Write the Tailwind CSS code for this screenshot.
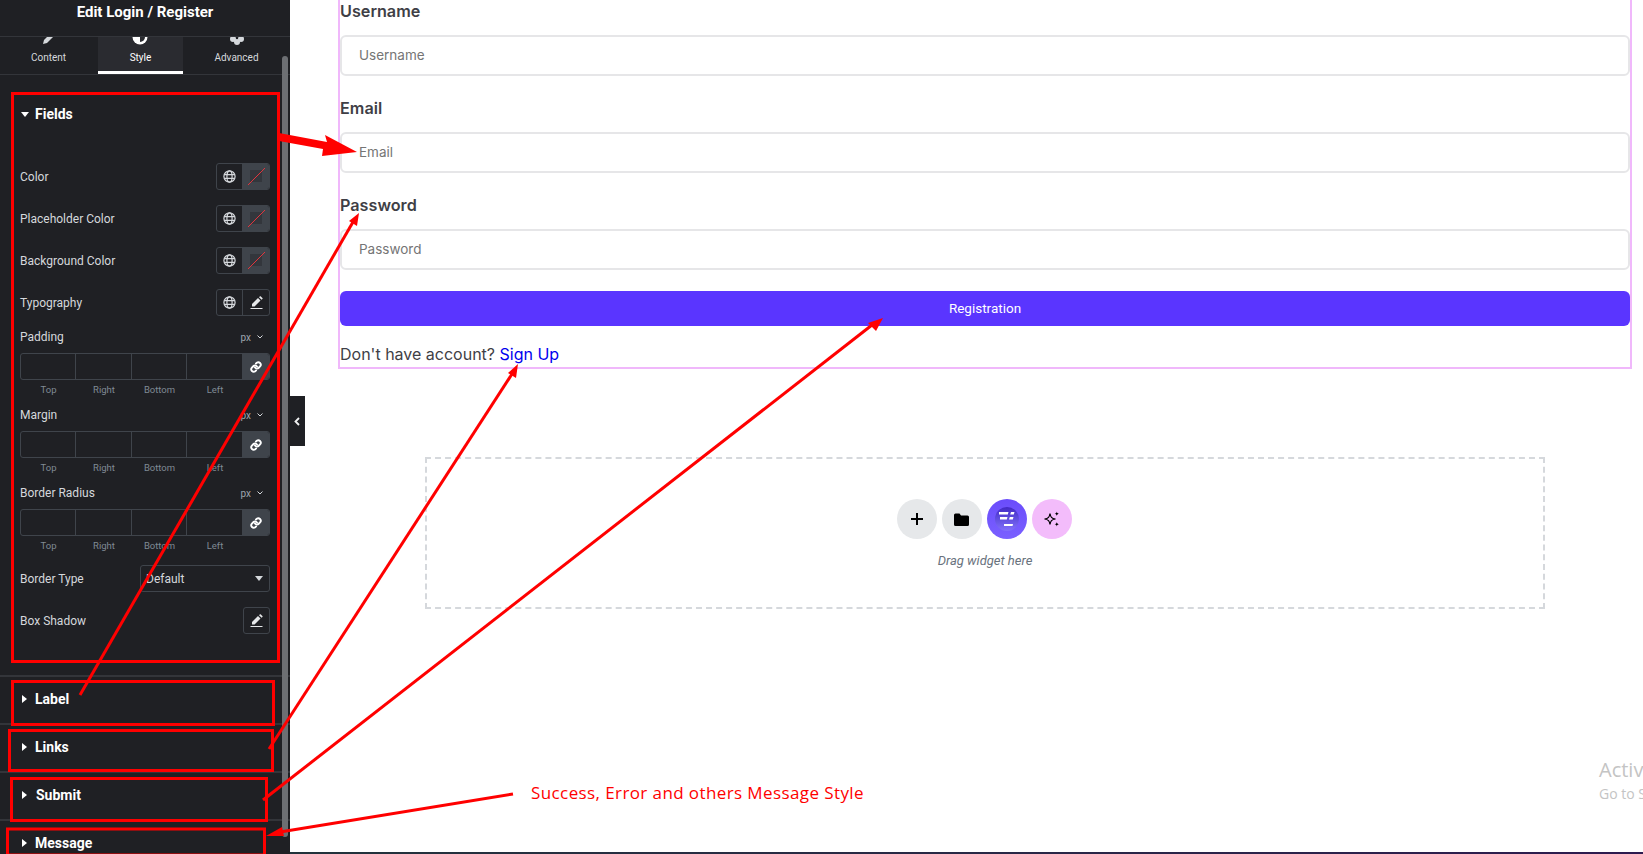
<!DOCTYPE html>
<html lang="en">
<head>
    <meta charset="UTF-8">
    <title>Edit Login / Register</title>
    <script src="https://cdn.jsdelivr.net/npm/@tailwindcss/browser@4"></script>
</head>
<body class="bg-white overflow-hidden">
<div class="relative w-[1643px] h-[854px] overflow-hidden flex font-['Roboto',sans-serif]">

    <!-- Editor panel -->
    <aside class="w-[290px] h-[854px] shrink-0 bg-[#1f2024] text-[#d5d8dc] text-[12px] flex flex-col overflow-hidden">
        <div class="h-[37px] shrink-0 border-b border-[#33353a] text-center text-white font-bold text-[15px] leading-[24px]">Edit Login / Register</div>

        <!-- Tabs -->
        <div class="h-[38px] shrink-0 border-b border-[#33353a] grid grid-cols-[98px_85px_1fr] text-[10px] text-center">
            <div class="relative h-[37px] overflow-hidden text-[#d5d8dc]">
                <svg class="absolute left-[42px] -top-[6px] w-[14px] h-[14px]" viewBox="0 0 14 14" fill="#d5d8dc"><path d="M1 13l1-4 7-7 3 3-7 7z"/></svg>
                <span class="absolute left-[-1px] right-0 top-[14px] leading-[14px]">Content</span>
            </div>
            <div class="relative h-[37px] overflow-hidden bg-[#2a2b30] border-b-[3px] border-white text-white">
                <svg class="absolute left-[34px] -top-[8px] w-[16px] h-[16px]" viewBox="0 0 16 16"><circle cx="8" cy="8" r="7.500" fill="#fff"/><path d="M8 3a5 5 0 0 1 0 10z" fill="#2a2b30"/></svg>
                <span class="absolute inset-x-0 top-[14px] leading-[14px]">Style</span>
            </div>
            <div class="relative h-[37px] overflow-hidden text-[#d5d8dc]">
                <svg class="absolute left-[47px] -top-[5px] w-[14px] h-[14px]" viewBox="0 0 14 14" fill="#d5d8dc"><circle cx="3" cy="7" r="3"/><circle cx="11" cy="7" r="3"/><circle cx="7" cy="10" r="3"/></svg>
                <span class="absolute inset-x-0 top-[14px] leading-[14px]">Advanced</span>
            </div>
        </div>

        <!-- Fields section -->
        <div class="h-[80px] shrink-0 flex items-center pl-[21px] pb-[2px] gap-[6px] text-white font-bold text-[14px]">
            <svg class="w-[8px] h-[5px]" viewBox="0 0 8 5" fill="#fff"><path d="M0 0h8L4 5z"/></svg>
            <span>Fields</span>
        </div>
        <div class="px-[20px] shrink-0">
            <div class="h-[42px] flex items-center justify-between">
                <span class="pt-[2px]">Color</span>
                <div class="w-[54px] h-[27px] flex border border-[#3f444b] rounded-[3px] overflow-hidden">
                    <div class="w-[26px] flex items-center justify-center border-r border-[#3f444b]">
                        <svg class="w-[13px] h-[13px]" viewBox="0 0 13 13" fill="none" stroke="#d5d8dc" stroke-width="1.200"><circle cx="6.500" cy="6.500" r="5.600"/><ellipse cx="6.500" cy="6.500" rx="2.600" ry="5.600"/><path d="M1.200 4.600h10.600M1.200 8.400h10.600"/></svg>
                    </div>
                    <div class="flex-1 bg-[#3f444b] flex items-center justify-center">
                        <svg class="w-[19px] h-[19px]" viewBox="0 0 19 19"><rect x="3" y="3" width="12" height="12" fill="#33363c"/><path d="M1 18L18 1" stroke="#e2343c"/></svg>
                    </div>
                </div>
            </div>
            <div class="h-[42px] flex items-center justify-between">
                <span class="pt-[2px]">Placeholder Color</span>
                <div class="w-[54px] h-[27px] flex border border-[#3f444b] rounded-[3px] overflow-hidden">
                    <div class="w-[26px] flex items-center justify-center border-r border-[#3f444b]">
                        <svg class="w-[13px] h-[13px]" viewBox="0 0 13 13" fill="none" stroke="#d5d8dc" stroke-width="1.200"><circle cx="6.500" cy="6.500" r="5.600"/><ellipse cx="6.500" cy="6.500" rx="2.600" ry="5.600"/><path d="M1.200 4.600h10.600M1.200 8.400h10.600"/></svg>
                    </div>
                    <div class="flex-1 bg-[#3f444b] flex items-center justify-center">
                        <svg class="w-[19px] h-[19px]" viewBox="0 0 19 19"><rect x="3" y="3" width="12" height="12" fill="#33363c"/><path d="M1 18L18 1" stroke="#e2343c"/></svg>
                    </div>
                </div>
            </div>
            <div class="h-[42px] flex items-center justify-between">
                <span class="pt-[2px]">Background Color</span>
                <div class="w-[54px] h-[27px] flex border border-[#3f444b] rounded-[3px] overflow-hidden">
                    <div class="w-[26px] flex items-center justify-center border-r border-[#3f444b]">
                        <svg class="w-[13px] h-[13px]" viewBox="0 0 13 13" fill="none" stroke="#d5d8dc" stroke-width="1.200"><circle cx="6.500" cy="6.500" r="5.600"/><ellipse cx="6.500" cy="6.500" rx="2.600" ry="5.600"/><path d="M1.200 4.600h10.600M1.200 8.400h10.600"/></svg>
                    </div>
                    <div class="flex-1 bg-[#3f444b] flex items-center justify-center">
                        <svg class="w-[19px] h-[19px]" viewBox="0 0 19 19"><rect x="3" y="3" width="12" height="12" fill="#33363c"/><path d="M1 18L18 1" stroke="#e2343c"/></svg>
                    </div>
                </div>
            </div>
            <div class="h-[42px] flex items-center justify-between">
                <span class="pt-[2px]">Typography</span>
                <div class="w-[54px] h-[27px] flex border border-[#3f444b] rounded-[3px] overflow-hidden">
                    <div class="w-[26px] flex items-center justify-center border-r border-[#3f444b]">
                        <svg class="w-[13px] h-[13px]" viewBox="0 0 13 13" fill="none" stroke="#d5d8dc" stroke-width="1.200"><circle cx="6.500" cy="6.500" r="5.600"/><ellipse cx="6.500" cy="6.500" rx="2.600" ry="5.600"/><path d="M1.200 4.600h10.600M1.200 8.400h10.600"/></svg>
                    </div>
                    <div class="flex-1 flex items-center justify-center">
                        <svg class="w-[13px] h-[13px]" viewBox="0 0 13 13" fill="#e6e8ea"><path d="M2 8L8 2l2.500 2.500-6 6H2zM9 1.200l1-1h.6l2 2v.6l-1 1z"/><rect x="0.500" y="12" width="12" height="1"/></svg>
                    </div>
                </div>
            </div>

            <!-- Padding -->
            <div class="mb-px">
                <div class="h-[28px] flex items-center justify-between">
                    <span>Padding</span>
                    <span class="flex items-center gap-[6px] mr-[7px] text-[10px] text-[#9da5ae]">px<svg class="w-[6px] h-[4px]" viewBox="0 0 6 4" fill="none" stroke="#d5d8dc"><path d="M.5.500L3 3l2.500-2.500"/></svg></span>
                </div>
                <div class="mt-[2px] h-[27px] grid grid-cols-[55px_56px_55px_55px_27px] border border-[#3f444b] rounded-[3px] overflow-hidden">
                    <div class="border-r border-[#3f444b]"></div>
                    <div class="border-r border-[#3f444b]"></div>
                    <div class="border-r border-[#3f444b]"></div>
                    <div></div>
                    <div class="bg-[#3f444b] flex items-center justify-center">
                        <svg class="w-[12px] h-[12px]" viewBox="0 0 24 24" fill="none" stroke="#fff" stroke-width="3.800" stroke-linecap="round"><path d="M10 13a5 5 0 0 0 7.500.500l3-3a5 5 0 0 0-7-7l-1.700 1.700"/><path d="M14 11a5 5 0 0 0-7.500-.500l-3 3a5 5 0 0 0 7 7l1.700-1.700"/></svg>
                    </div>
                </div>
                <div class="h-[20px] pl-px grid grid-cols-[55px_56px_55px_56px_27px] text-center text-[9.500px] leading-[20px] text-[#7f8a94]"><span>Top</span><span>Right</span><span>Bottom</span><span>Left</span></div>
            </div>
            <!-- Margin -->
            <div class="mb-px">
                <div class="h-[28px] flex items-center justify-between">
                    <span>Margin</span>
                    <span class="flex items-center gap-[6px] mr-[7px] text-[10px] text-[#9da5ae]">px<svg class="w-[6px] h-[4px]" viewBox="0 0 6 4" fill="none" stroke="#d5d8dc"><path d="M.5.500L3 3l2.500-2.500"/></svg></span>
                </div>
                <div class="mt-[2px] h-[27px] grid grid-cols-[55px_56px_55px_55px_27px] border border-[#3f444b] rounded-[3px] overflow-hidden">
                    <div class="border-r border-[#3f444b]"></div>
                    <div class="border-r border-[#3f444b]"></div>
                    <div class="border-r border-[#3f444b]"></div>
                    <div></div>
                    <div class="bg-[#3f444b] flex items-center justify-center">
                        <svg class="w-[12px] h-[12px]" viewBox="0 0 24 24" fill="none" stroke="#fff" stroke-width="3.800" stroke-linecap="round"><path d="M10 13a5 5 0 0 0 7.500.500l3-3a5 5 0 0 0-7-7l-1.700 1.700"/><path d="M14 11a5 5 0 0 0-7.500-.500l-3 3a5 5 0 0 0 7 7l1.700-1.700"/></svg>
                    </div>
                </div>
                <div class="h-[20px] pl-px grid grid-cols-[55px_56px_55px_56px_27px] text-center text-[9.500px] leading-[20px] text-[#7f8a94]"><span>Top</span><span>Right</span><span>Bottom</span><span>Left</span></div>
            </div>
            <!-- Border radius -->
            <div class="mb-px">
                <div class="h-[28px] flex items-center justify-between">
                    <span>Border Radius</span>
                    <span class="flex items-center gap-[6px] mr-[7px] text-[10px] text-[#9da5ae]">px<svg class="w-[6px] h-[4px]" viewBox="0 0 6 4" fill="none" stroke="#d5d8dc"><path d="M.5.500L3 3l2.500-2.500"/></svg></span>
                </div>
                <div class="mt-[2px] h-[27px] grid grid-cols-[55px_56px_55px_55px_27px] border border-[#3f444b] rounded-[3px] overflow-hidden">
                    <div class="border-r border-[#3f444b]"></div>
                    <div class="border-r border-[#3f444b]"></div>
                    <div class="border-r border-[#3f444b]"></div>
                    <div></div>
                    <div class="bg-[#3f444b] flex items-center justify-center">
                        <svg class="w-[12px] h-[12px]" viewBox="0 0 24 24" fill="none" stroke="#fff" stroke-width="3.800" stroke-linecap="round"><path d="M10 13a5 5 0 0 0 7.500.500l3-3a5 5 0 0 0-7-7l-1.700 1.700"/><path d="M14 11a5 5 0 0 0-7.500-.500l-3 3a5 5 0 0 0 7 7l1.700-1.700"/></svg>
                    </div>
                </div>
                <div class="h-[20px] pl-px grid grid-cols-[55px_56px_55px_56px_27px] text-center text-[9.500px] leading-[20px] text-[#7f8a94]"><span>Top</span><span>Right</span><span>Bottom</span><span>Left</span></div>
            </div>

            <div class="h-[42px] flex items-center justify-between">
                <span class="pt-[2px]">Border Type</span>
                <div class="w-[130px] h-[27px] border border-[#3f444b] rounded-[3px] flex items-center justify-between pl-[5px] pr-[6px]">
                    <span class="pt-[2px]">Default</span>
                    <svg class="w-[8px] h-[5px]" viewBox="0 0 8 5" fill="#d5d8dc"><path d="M0 0h8L4 5z"/></svg>
                </div>
            </div>
            <div class="h-[42px] flex items-center justify-between">
                <span class="pt-[2px]">Box Shadow</span>
                <div class="w-[27px] h-[27px] border border-[#3f444b] rounded-[3px] flex items-center justify-center">
                    <svg class="w-[13px] h-[13px]" viewBox="0 0 13 13" fill="#e6e8ea"><path d="M2 8L8 2l2.500 2.500-6 6H2zM9 1.200l1-1h.6l2 2v.6l-1 1z"/><rect x="0.500" y="12" width="12" height="1"/></svg>
                </div>
            </div>
        </div>

        <!-- Collapsed sections -->
        <div class="mt-[34px] border-t-2 border-[#33353a] shrink-0">
            <div class="h-[48px] pb-[2px] border-b-2 border-[#33353a] flex items-center pl-[22px] gap-[8px] text-white font-bold text-[14px]">
                <svg class="w-[5px] h-[8px]" viewBox="0 0 5 8" fill="#fff"><path d="M0 0l5 4-5 4z"/></svg><span>Label</span>
            </div>
            <div class="h-[48px] pb-[2px] border-b-2 border-[#33353a] flex items-center pl-[22px] gap-[8px] text-white font-bold text-[14px]">
                <svg class="w-[5px] h-[8px]" viewBox="0 0 5 8" fill="#fff"><path d="M0 0l5 4-5 4z"/></svg><span>Links</span>
            </div>
            <div class="h-[48px] pb-[2px] border-b-2 border-[#33353a] flex items-center pl-[22px] gap-[8px] text-white font-bold text-[14px]">
                <svg class="w-[5px] h-[8px]" viewBox="0 0 5 8" fill="#fff"><path d="M0 0l5 4-5 4z"/></svg><span class="ml-px">Submit</span>
            </div>
            <div class="h-[48px] pb-[4px] flex items-center pl-[22px] gap-[8px] text-white font-bold text-[14px]">
                <svg class="w-[5px] h-[8px]" viewBox="0 0 5 8" fill="#fff"><path d="M0 0l5 4-5 4z"/></svg><span>Message</span>
            </div>
        </div>
    </aside>

    <!-- Panel scrollbar and collapse handle -->
    <div class="absolute left-[282px] top-[56px] w-[6px] h-[781px] rounded-[3px] bg-[#6d6f73]"></div>
    <div class="absolute left-[290px] top-[396px] w-[15px] h-[50px] pr-[1px] bg-[#1f2024] flex items-center justify-center">
        <svg class="w-[6px] h-[9px]" viewBox="0 0 6 9" fill="none" stroke="#f1f2f3" stroke-width="1.800"><path d="M5 1L1.500 4.500 5 8"/></svg>
    </div>

    <!-- Canvas -->
    <main class="flex-1 pl-[48px] pr-[11px] -mt-[1px] font-['Inter',sans-serif]">
        <div class="border-2 border-t-0 border-[#f0b8fb] h-[370px] text-[#3f3f46]">
            <label class="block h-[24px] mb-[12px] text-[16.200px] leading-[24px] font-semibold">Username</label>
            <div class="h-[41px] mb-[20px] border-2 border-[#e6e6e8] rounded-[6px] pl-[17px] flex items-center text-[13.500px] text-[#757575]">Username</div>
            <label class="block h-[24px] mb-[12px] text-[16.200px] leading-[24px] font-semibold">Email</label>
            <div class="h-[41px] mb-[20px] border-2 border-[#e6e6e8] rounded-[6px] pl-[17px] flex items-center text-[13.500px] text-[#757575]">Email</div>
            <label class="block h-[24px] mb-[12px] text-[16.200px] leading-[24px] font-semibold">Password</label>
            <div class="h-[41px] mb-[21px] border-2 border-[#e6e6e8] rounded-[6px] pl-[17px] flex items-center text-[13.500px] text-[#757575]">Password</div>
            <div class="h-[35px] bg-[#5a35ff] rounded-[6px] flex items-center justify-center text-white text-[13.500px] font-['Roboto',sans-serif]">Registration</div>
            <p class="mt-[16px] text-[16px] leading-[24px]">Don't have account? <span class="text-[#0000ee]">Sign Up</span></p>
        </div>

        <!-- Empty drop area -->
        <div class="mt-[88px] ml-[87px] w-[1120px] h-[152px] border-2 border-dashed border-[#d5d8dc] flex flex-col items-center pt-[40px] font-['Roboto',sans-serif]">
            <div class="flex gap-[5px] pr-[2px]">
                <div class="w-[40px] h-[40px] rounded-full bg-[#e6e8ea] flex items-center justify-center">
                    <svg class="w-[14px] h-[14px]" viewBox="0 0 14 14" stroke="#000" stroke-width="2"><path d="M7 1v12M1 7h12"/></svg>
                </div>
                <div class="w-[40px] h-[40px] rounded-full bg-[#e6e8ea] flex items-center justify-center">
                    <svg class="w-[15px] h-[13px]" viewBox="0 0 15 13" fill="#000"><path d="M0 2a1.500 1.500 0 0 1 1.500-1.500h4L7 2.500h6.500A1.500 1.500 0 0 1 15 4v7.500a1.500 1.500 0 0 1-1.500 1.500h-12A1.500 1.500 0 0 1 0 11.500z"/></svg>
                </div>
                <div class="w-[40px] h-[40px] rounded-full bg-gradient-to-b from-[#6a4cfb] to-[#7a60ff] flex items-center justify-center">
                    <div class="w-[24px] h-[24px] rounded-full bg-gradient-to-b from-[#4328c4] to-[#8370fb] flex items-center justify-center">
                        <svg class="w-[16px] h-[15px]" viewBox="0 0 16 15" fill="#fff"><path d="M0 0h9.500L8.800 2.400H0zM12 0h3.500L14.800 2.400H11.200zM1 5h7.500L7.800 7.400H1zM10.800 5h3.700L13.800 7.400H10zM5 12h9l-.5 2H5z"/></svg>
                    </div>
                </div>
                <div class="w-[40px] h-[40px] rounded-full bg-[#f3bcfb] flex items-center justify-center">
                    <svg class="w-[16px] h-[16px]" viewBox="0 0 16 16"><path d="M6 2.500C6.600 6 7.500 7.400 11.500 8 7.500 8.600 6.600 10 6 13.500 5.400 10 4.500 8.600.5 8 4.500 7.400 5.400 6 6 2.500z" fill="none" stroke="#000" stroke-width="1.200"/><path d="M12.800.5c.2 1.400.8 2 2.200 2.200-1.400.2-2 .8-2.200 2.200-.2-1.400-.8-2-2.200-2.200 1.400-.2 2-.8 2.200-2.200zM12.800 11c.2 1.400.8 2 2.200 2.200-1.400.2-2 .8-2.200 2.200-.2-1.400-.8-2-2.200-2.200 1.400-.2 2-.8 2.200-2.200z" fill="#000"/></svg>
                </div>
            </div>
            <p class="mt-[14px] italic text-[13px] leading-[16px] text-[#69727d]">Drag widget here</p>
        </div>
    </main>

    <!-- Windows watermark -->
    <div class="absolute left-[1599px] top-[756px] font-['Open_Sans',sans-serif] text-[#c4c4c4] whitespace-nowrap">
        <div class="text-[20px] leading-[28px]">Activ</div>
        <div class="text-[14px] leading-[19px]">Go to S</div>
    </div>

    <!-- Bottom edge of the capture -->
    <div class="absolute left-[290px] right-0 bottom-0 h-[2px] bg-gradient-to-r from-[#22333b] to-[#2d1a4f]"></div>

    <!-- Red annotations drawn over the screenshot -->
    <svg class="absolute left-0 top-0 w-[1643px] h-[854px] pointer-events-none" viewBox="0 0 1643 854" fill="none">
        <g stroke="#ff0000" stroke-width="3">
            <rect x="12.500" y="93.500" width="266" height="568"/>
            <rect x="12.500" y="681.500" width="261" height="43"/>
            <rect x="9.500" y="730.500" width="263" height="40"/>
            <rect x="11.500" y="778.500" width="255" height="42"/>
            <rect x="7.500" y="829" width="257" height="26"/>
            <path d="M80 695L353 222"/>
            <path d="M269 749L512 374"/>
            <path d="M263 800L872 325"/>
            <path d="M513 794L280 832"/>
        </g>
        <g fill="#ff0000">
            <path d="M279 133L327 142 325 135 357 152 322 156 323 149 279 141z"/>
            <path d="M359 213L357 226 349 221z"/>
            <path d="M518 364L516 378 508 373z"/>
            <path d="M883 318L876 331 868 323z"/>
            <path d="M266 836L282 827 284 836z"/>
        </g>
    </svg>
    <div class="absolute left-[531px] top-[780px] font-['Open_Sans',sans-serif] text-[#ff0000] text-[17px] tracking-[0.4px] leading-[26px] whitespace-nowrap">Success, Error and others Message Style</div>
</div>
</body>
</html>
